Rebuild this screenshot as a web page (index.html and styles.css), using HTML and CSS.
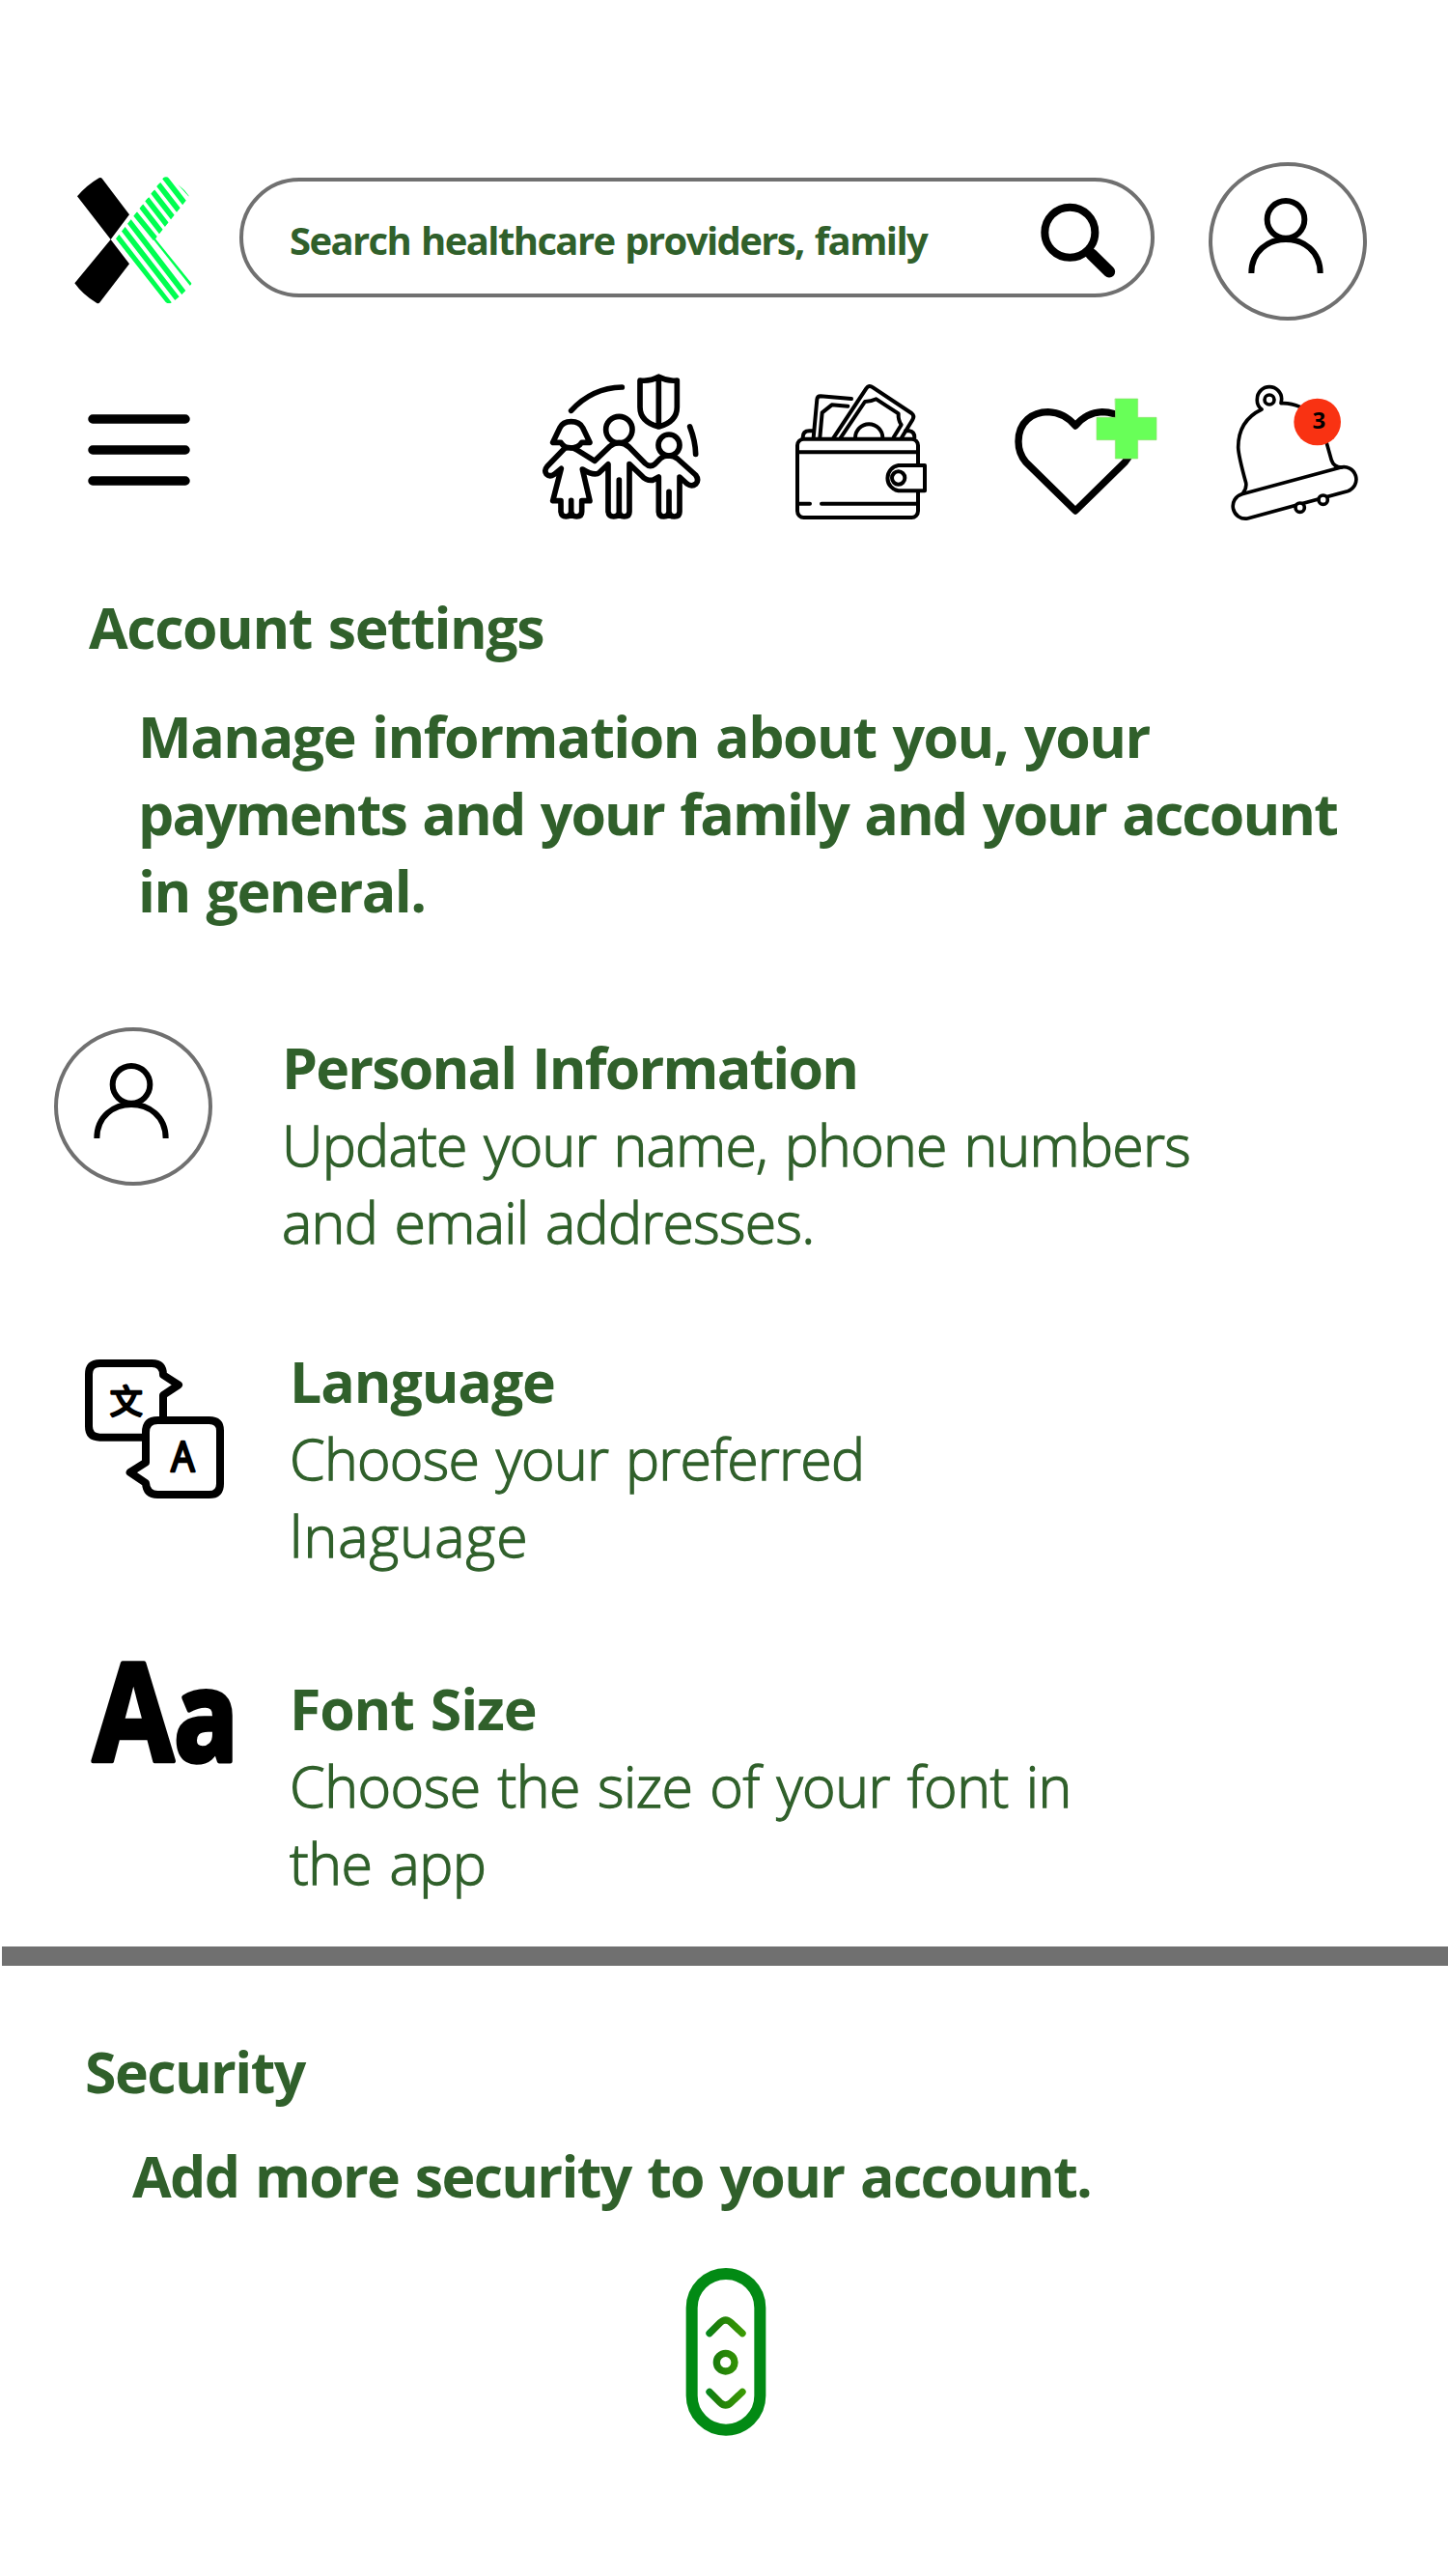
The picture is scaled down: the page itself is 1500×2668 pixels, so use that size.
FILE: index.html
```html
<!DOCTYPE html>
<html lang="en">
<head>
<meta charset="utf-8">
<title>Account settings</title>
<link rel="stylesheet" href="styles.css">
</head>
<body>
<header class="top">
  <svg class="logo" viewBox="0 24 480 492">
    <defs><clipPath id="arm"><path d="M180 262L328 72Q337 67 347 74Q385 95 409 130L303 262L416 401Q385 440 350 462Q342 465 335 459Z"/></clipPath></defs>
    <path d="M60 130Q90 95 128 73Q134 70 138 76L222 187L164 264Z"/>
    <path d="M52 400L164 264L222 340L130 460Q126 465 120 461Q78 437 52 400Z"/>
    <g clip-path="url(#arm)" class="stripes">
      <path d="M182 252L352 472M201 229L380 460M220 206L400 441M239 183L303 262M258 160L328 250M276 138L346 228M294 115L364 205M312 92L382 182M330 69L400 159"/>
      <path class="fine" d="M298 258L420 412"/>
      <path class="sliver" d="M373 93Q394 108 409 131L403 127Z"/>
    </g>
  </svg>
  <div class="search">
    <span class="query">Search healthcare providers, family</span>
    <svg class="lens" viewBox="110 145 240 240"><circle cx="204" cy="240" r="78"/><path class="handle" d="M271 308L326 362"/></svg>
  </div>
  <div class="avatar"><svg viewBox="0 0 492 492"><circle cx="240" cy="178" r="58"/><path d="M133 345C133 205 347 205 347 345"/></svg></div>
</header>

<nav class="bar">
  <svg class="menu" viewBox="0 0 106 76"><path d="M5 6H101M5 38H101M5 70H101"/></svg>
  <svg class="family" viewBox="0 30 570 495">
    <path d="M125 151Q190 80 283 78M494 201Q511 245 512 286"/>
    <path d="M397 46Q370 61 339 57V140Q339 185 397 201Q454 185 454 140V57Q425 61 397 46ZM397 46V201"/>
    <circle cx="274" cy="210" r="41"/><circle cx="429" cy="258" r="33"/>
    <path d="M125 185Q99 185 90 204L68 250H93Q103 267 125 267Q147 267 158 250H183L161 204Q151 185 125 185Z"/>
    <path d="M105 268L50 325Q40 336 48 348Q58 358 72 349L94 331L68 431H93V465Q95 480 109 480Q125 480 125 465V430M125 465Q127 480 142 480Q158 480 158 465V431H183L160 333Q198 356 213 343L240 317V465Q242 480 257 480Q274 480 274 465V366M274 465Q274 480 290 480Q306 480 306 465V317L345 354Q357 369 379 367L397 357V465Q398 480 413 480Q429 480 429 465V403M429 465Q430 480 446 480Q462 480 462 465V357L485 378Q500 389 513 378Q523 366 512 351L455 300Q445 292 429 291Q412 291 402 300L385 317Q370 329 355 315L305 264Q290 251 274 251Q258 251 245 262L198 307L145 274Q123 261 105 268"/>
  </svg>
  <svg class="wallet" viewBox="0 0 480 495">
    <path d="M65 205Q65 184 85 184H96M384 184H396Q412 186 412 205"/>
    <path d="M98 205L109 86Q110 76 120 76L216 84M118 205L125 127L155 103L205 107"/>
    <path d="M160 206L262 52Q270 40 283 49L403 129Q413 137 406 149L372 205M182 206L258 93Q277 93 293 85L362 130Q361 151 371 165L347 204"/>
    <path d="M228 205A42 42 0 0 1 313 205"/>
    <rect x="48" y="209" width="375" height="244" rx="20"/>
    <path d="M48 250H423M48 410H87M123 410H423"/>
    <path class="flap" d="M444 291H362A40 40 0 0 0 362 370H444Z"/>
    <circle cx="362" cy="330" r="20"/>
  </svg>
  <svg class="heart" viewBox="0 0 540 495">
    <path d="M222 432L68 281Q45 254 45 217C45 155 90 125 137 125Q188 127 222 168Q256 127 305 125C353 125 399 155 399 217Q399 254 376 281Z"/>
    <path class="plus" d="M346 84H416V142H474V212H416V270H346V212H288V142H346Z"/>
  </svg>
  <svg class="bell" viewBox="675 0 465 495">
    <path d="M801 117Q785 104 787 85A37 37 0 0 1 863 85L861 98Q890 96 920 109M801 117Q728 152 728 235Q729 262 752 345Q755 364 742 378M1003 222L1018 275Q1025 297 1049 297"/>
    <circle cx="825" cy="87" r="15"/>
    <path d="M740 380L1045 298A38 38 0 0 1 1068 371L757 456A39 39 0 0 1 740 380Z"/>
    <circle class="hole" cx="920" cy="422" r="14"/><circle class="hole" cx="992" cy="398" r="14"/>
    <circle class="badge" cx="974" cy="156" r="73"/>
    <text x="979" y="178" text-anchor="middle">3</text>
  </svg>
</nav>

<main>
  <section class="account">
    <h1>Account settings</h1>
    <p class="lead"><span class="l1">Manage information about you, your</span><br><span class="l2">payments and your family and your account</span><br><span class="l3">in general.</span></p>
    <div class="item personal">
      <div class="avatar"><svg viewBox="0 0 492 492"><circle cx="240" cy="178" r="58"/><path d="M133 345C133 205 347 205 347 345"/></svg></div>
      <div class="copy"><h2>Personal Information</h2><p>Update your name, phone numbers<br>and email addresses.</p></div>
    </div>
    <div class="item language">
      <svg class="bubbles" viewBox="0 0 540 540">
        <path d="M297 240V165L345 133L297 102Q297 66 262 66H100Q66 66 66 100V262Q66 296 100 296H240"/>
        <path d="M243 280Q243 243 280 243H440Q474 243 474 275V440Q474 474 440 474H280Q245 474 243 438L194 405L243 374Z"/>
        <text class="han" x="182" y="223" text-anchor="middle">文</text>
        <text class="latin" x="322" y="403" textLength="73" lengthAdjust="spacingAndGlyphs">A</text>
      </svg>
      <div class="copy"><h2>Language</h2><p>Choose your preferred<br><span class="wide">lnaguage</span></p></div>
    </div>
    <div class="item font-size">
      <svg class="letters" viewBox="0 0 510 450">
        <text x="49" y="371" textLength="451" lengthAdjust="spacingAndGlyphs"><tspan class="cap">A</tspan><tspan class="low">a</tspan></text>
      </svg>
      <div class="copy"><h2>Font Size</h2><p class="roomy">Choose the size of your font in<br>the app</p></div>
    </div>
  </section>
  <section class="security">
    <h1>Security</h1>
    <p class="lead">Add more security to your account.</p>
    <svg class="scroller" viewBox="0 0 390 630">
      <defs><linearGradient id="leaf" gradientUnits="userSpaceOnUse" x1="125" y1="0" x2="248" y2="0"><stop offset="0" stop-color="#048a20"/><stop offset=".25" stop-color="#1c7d0a"/><stop offset="1" stop-color="#3d9c04"/></linearGradient></defs>
      <rect x="80" y="75" width="212" height="485" rx="106"/>
      <path d="M135 260L168 227Q185 211 202 227L237 260M135 442L168 475Q185 491 202 475L237 442"/>
      <circle cx="185" cy="350" r="28"/>
    </svg>
  </section>
</main>
</body>
</html>
```
FILE: styles.css
```css
* { box-sizing: border-box; }
body {
  margin: 0;
  padding-top: 168px;
  width: 1500px;
  min-height: 2668px;
  background: #fff;
  color: #30602b;
  font: 700 59px/80px "Open Sans", "Noto Sans", sans-serif;
  word-spacing: 3px;
  overflow-x: hidden;
}
svg { display: block; flex: none; overflow: visible; }
h1, h2, p { margin: 0; font-size: inherit; white-space: nowrap; }

.top { display: flex; height: 164px; padding-left: 60px; }
.logo { width: 160px; height: 164px; }
.stripes { fill: none; stroke: #00ff50; stroke-width: 17; }
.stripes .fine { stroke-width: 10; }
.stripes .sliver { fill: #00ff50; stroke: none; }
.search {
  display: flex;
  align-items: center;
  justify-content: space-between;
  width: 948px;
  height: 124px;
  margin: 16px 56px 0 28px;
  padding: 0 35px 0 48px;
  border: 4px solid #707070;
  border-radius: 62px;
}
.query { padding-top: 5px; font-size: 40px; line-height: 60px; letter-spacing: -1.6px; word-spacing: 2px; white-space: nowrap; }
.lens { width: 80px; height: 80px; margin-top: 5px; fill: none; stroke: #000; stroke-width: 24; }
.lens .handle { stroke-width: 37; stroke-linecap: round; }
.avatar { width: 164px; height: 164px; border: 4px solid #707070; border-radius: 50%; }
.avatar svg { width: 164px; height: 164px; margin: -4px; fill: none; stroke: #000; stroke-width: 18; }

.bar { display: flex; height: 165px; margin-top: 53px; padding-left: 91px; fill: none; stroke: #000; stroke-linecap: round; stroke-linejoin: round; }
.menu { width: 106px; height: 76px; margin: 43px 353px 0 0; stroke-width: 9.5; }
.family { width: 190px; height: 165px; margin-right: 70px; stroke-width: 17; }
.wallet { width: 160px; height: 165px; margin-right: 70px; stroke-width: 12; }
.heart { width: 180px; height: 165px; margin-right: 45px; stroke-width: 22; }
.bell { width: 155px; height: 165px; stroke-width: 11; }
.flap, .hole { fill: #fff; }
.plus { fill: #68ff58; stroke: #8fe070; stroke-width: 2; stroke-linejoin: miter; }
.badge { fill: #f93212; stroke: none; }
.bell text { fill: #000; stroke: none; font-size: 72px; }

.account { padding-top: 59px; }
.account h1 { padding-left: 92px; letter-spacing: -1.45px; }
.lead { padding-left: 143px; letter-spacing: -1.1px; }
.account .lead { margin-top: 33px; }
.lead .l1 { letter-spacing: -1.47px; }
.lead .l2 { letter-spacing: -1.9px; }
.lead .l3 { letter-spacing: -1.5px; }
.item { display: flex; align-items: flex-start; }
.copy p { font-weight: 300; letter-spacing: -.73px; -webkit-text-stroke: 1.3px currentColor; }
.personal { margin: 102px 0 0 56px; gap: 71px; }
.personal .copy { padding-top: 1px; }
.personal h2 { margin-left: 1px; letter-spacing: -1.8px; }
.personal p { margin-left: 1px; }
.language { margin: 85px 0 0 70px; gap: 50px; }
.language h2 { letter-spacing: -1.1px; }
.font-size h2 { letter-spacing: -1.15px; }
.copy .wide { letter-spacing: 1.05px; }
.copy .roomy { letter-spacing: -.48px; }
.bubbles { width: 180px; height: 180px; fill: none; stroke: #000; stroke-width: 24; stroke-linejoin: round; }
.bubbles text { fill: #000; stroke-linejoin: round; }
.bubbles .han { font: 400 102px "Noto Sans CJK SC", sans-serif; stroke-width: 7; }
.bubbles .latin { font: 400 132px "Open Sans", sans-serif; stroke-width: 8; }
.font-size { margin: 70px 0 0 80px; gap: 50px; }
.font-size .copy { padding-top: 29px; }
.letters { width: 170px; height: 150px; fill: #000; stroke: #000; stroke-linejoin: round; }
.letters .cap { font: 700 428px "Open Sans", sans-serif; stroke-width: 14; }
.letters .low { font: 700 388px "Open Sans", sans-serif; stroke-width: 16; }

.security { margin: 47px 0 0 2px; border-top: 20px solid #707070; padding-top: 69px; }
.security h1 { padding-left: 86px; letter-spacing: -1.6px; }
.security .lead { margin-top: 28px; padding-left: 135px; letter-spacing: -1.7px; }
.scroller { width: 130px; height: 210px; margin: 37px 0 0 688px; fill: none; stroke: #028a14; stroke-width: 36; }
.scroller path, .scroller circle { stroke: url(#leaf); stroke-width: 22; stroke-linecap: round; }
```
